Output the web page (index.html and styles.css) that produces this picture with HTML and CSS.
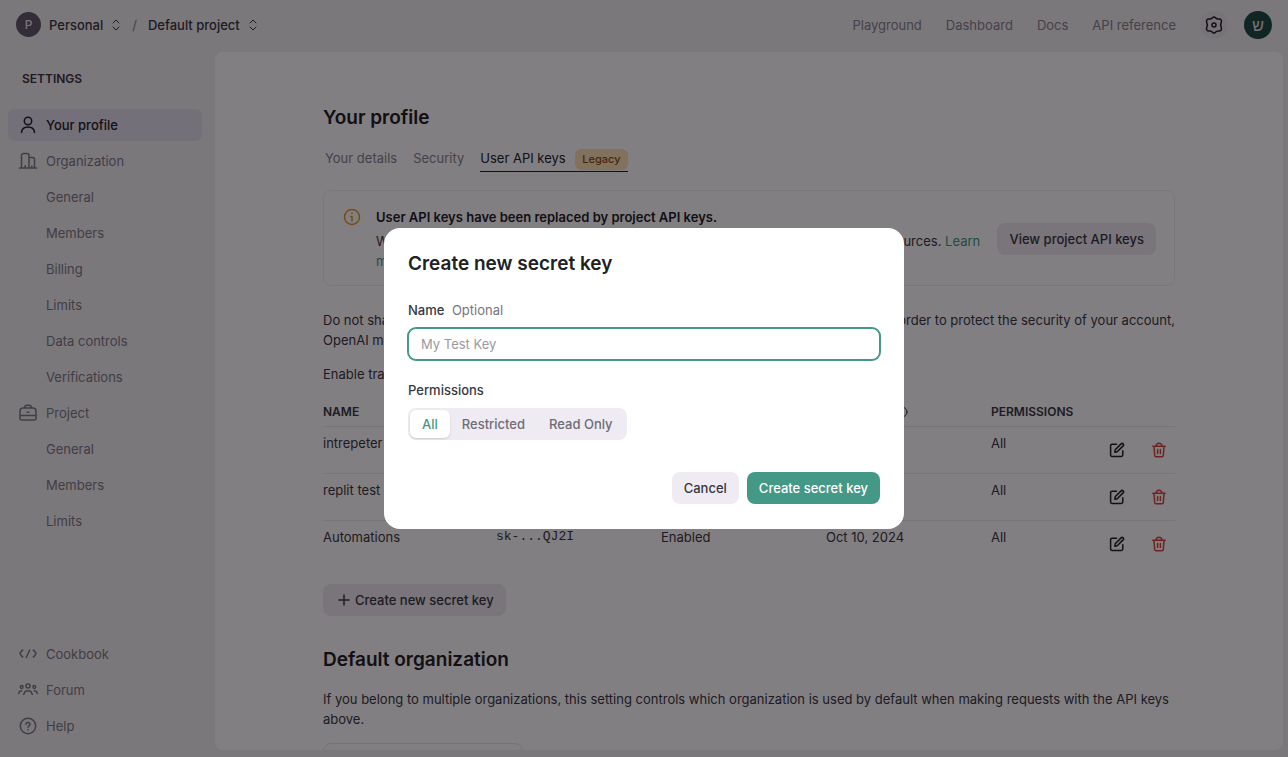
FILE: index.html
```html
<!DOCTYPE html>
<html lang="en">

<head>
    <meta charset="UTF-8">
    <meta name="viewport" content="width=device-width, initial-scale=1.0">
    <title>Your profile - API keys</title>
    <link rel="stylesheet" href="styles.css">
</head>

<body>
    <!-- Shared icons -->
    <svg class="sprite" aria-hidden="true">
        <symbol id="icon-updown" viewBox="0 0 10 14">
            <path d="M2 5l3-3 3 3M2 9l3 3 3-3" />
        </symbol>
        <symbol id="icon-edit" viewBox="0 0 16 16">
            <path d="M7.5 2.2H3A1.4 1.4 0 0 0 1.600 3.600V13A1.400 1.400 0 0 0 3 14.400h9.400a1.400 1.400 0 0 0 1.400-1.400V8.700" />
            <path d="M5.800 10.200l.4-2.400 5.900-5.900a1.400 1.400 0 0 1 2 2L8.200 9.800z" />
        </symbol>
        <symbol id="icon-trash" viewBox="0 0 16 16">
            <path d="M1.800 4.300h12.400M5 4.100C5.200 2.200 6.300 1.200 8 1.200s2.800 1 3 2.900M3 4.500l.7 9c.1.800.6 1.300 1.300 1.300h6c.7 0 1.200-.5 1.300-1.300l.7-9M6.600 7.500v4M9.400 7.500v4" />
        </symbol>
    </svg>

    <div class="app">
        <header class="topbar">
            <div class="crumbs">
                <span class="org-badge">P</span>
                <button class="crumb" type="button">Personal <svg class="updown"><use href="#icon-updown" /></svg></button>
                <span class="slash">/</span>
                <button class="crumb" type="button">Default project <svg class="updown"><use href="#icon-updown" /></svg></button>
            </div>
            <nav class="topnav">
                <a href="#">Playground</a>
                <a href="#">Dashboard</a>
                <a href="#">Docs</a>
                <a href="#">API reference</a>
                <a href="#" class="gear" aria-label="Settings">
                    <svg viewBox="0 0 20 20">
                        <path d="M8.500 2.800Q10 1 11.500 2.800Q12.800 4.400 14.900 4Q17.900 3.900 17.400 6.800Q15.800 10 17.400 13.200Q17.900 16.100 14.900 16Q12.800 15.600 11.500 17.200Q10 19 8.500 17.200Q7.200 15.600 5.100 16Q2.100 16.100 2.600 13.200Q4.200 10 2.600 6.800Q2.100 3.900 5.100 4Q7.200 4.400 8.500 2.800z" />
                        <circle cx="10" cy="10" r="2" />
                    </svg>
                </a>
                <a href="#" class="avatar" aria-label="Account">ש</a>
            </nav>
        </header>

        <aside class="sidebar">
            <h2>SETTINGS</h2>
            <nav class="menu">
                <a href="#" class="active">
                    <svg viewBox="0 0 20 20"><circle cx="10" cy="6" r="3.700" /><path d="M3.500 17.500c.3-3.600 3-5.500 6.500-5.500s6.200 1.900 6.500 5.500" /></svg>
                    Your profile
                </a>
                <a href="#">
                    <svg viewBox="0 0 20 20"><path d="M1.500 17h17M3.500 17V4.500a2 2 0 0 1 2-2h3.500a2 2 0 0 1 2 2V17M11 6.500h3.500a2 2 0 0 1 2 2V17M7.200 17v-2.500M13.800 17v-2" /></svg>
                    Organization
                </a>
                <a href="#" class="sub">General</a>
                <a href="#" class="sub">Members</a>
                <a href="#" class="sub">Billing</a>
                <a href="#" class="sub">Limits</a>
                <a href="#" class="sub">Data controls</a>
                <a href="#" class="sub">Verifications</a>
                <a href="#">
                    <svg viewBox="0 0 20 20"><path d="M4.500 5h11a3 3 0 0 1 2.500 3v7a2 2 0 0 1-2 2H4a2 2 0 0 1-2-2V8a3 3 0 0 1 2.500-3zM6.500 5c.2-1.800 1-2.700 2.500-2.700h2c1.500 0 2.300.9 2.500 2.700M2 12.500h16M9.200 9.300h1.600" /></svg>
                    Project
                </a>
                <a href="#" class="sub">General</a>
                <a href="#" class="sub">Members</a>
                <a href="#" class="sub">Limits</a>
            </nav>
            <nav class="menu menu-bottom">
                <a href="#">
                    <svg viewBox="0 0 20 20"><path d="M4.800 6C3 7 2.800 8.500 2 9.500c.8 1 1 2.500 2.800 3.500M15.200 6c1.800 1 2 2.500 2.800 3.500-.8 1-1 2.500-2.800 3.500M11.700 6l-3.400 7.500" /></svg>
                    Cookbook
                </a>
                <a href="#">
                    <svg viewBox="0 0 20 20"><circle cx="10" cy="6" r="2" /><circle cx="3.700" cy="7" r="1.400" /><circle cx="16.300" cy="7" r="1.400" /><path d="M5.800 14.500c.4-2.500 2-3.700 4.200-3.700s3.800 1.200 4.200 3.700M.8 13.500c.2-1.700 1.200-2.700 2.700-2.800M19.200 13.500c-.2-1.700-1.200-2.700-2.700-2.800" /></svg>
                    Forum
                </a>
                <a href="#">
                    <svg viewBox="0 0 20 20"><circle cx="10" cy="10" r="7.700" /><path d="M8 8.300c.2-2.400 4-2.300 4 0 0 1.500-2 1.500-2 3M10 13.500v.2" /></svg>
                    Help
                </a>
            </nav>
        </aside>

        <main class="panel">
            <div class="content">
                <h1>Your profile</h1>
                <nav class="tabs">
                    <a href="#">Your details</a>
                    <a href="#">Security</a>
                    <a href="#" class="current">User API keys <span class="tag">Legacy</span></a>
                </nav>

                <section class="notice">
                    <svg viewBox="0 0 20 20"><circle cx="10" cy="10" r="7.500" /><path d="M8.800 9.500H10V14M10 6v.5" /></svg>
                    <div class="notice-text">
                        <strong>User API keys have been replaced by project API keys.</strong>
                        <p>We recommend using project based API keys for more granular control over your resources. <a href="#">Learn more</a></p>
                    </div>
                    <button class="btn" type="button">View project API keys</button>
                </section>

                <p class="text">Do not share your API key with others or expose it in the browser or other client-side code. In order to protect the security of your account, OpenAI may automatically disable any API key that has leaked publicly.</p>
                <p class="text">Enable tracking to see usage per API key on the Usage page.</p>

                <table>
                    <thead>
                        <tr>
                            <th class="col-name">NAME</th>
                            <th class="col">SECRET KEY</th>
                            <th class="col">TRACKING</th>
                            <th class="col">LAST USED <svg class="info" viewBox="0 0 12 12"><circle cx="6" cy="6" r="5" /><path d="M6 5.500V9M6 3v.5" /></svg></th>
                            <th>PERMISSIONS</th>
                            <th></th>
                        </tr>
                    </thead>
                    <tbody>
                        <tr>
                            <td>intrepeter</td>
                            <td class="key">sk-...h4Xa</td>
                            <td>Enabled</td>
                            <td>Never</td>
                            <td>All</td>
                            <td>
                                <div class="actions">
                                    <button type="button" aria-label="Edit"><svg><use href="#icon-edit" /></svg></button>
                                    <button type="button" class="delete" aria-label="Delete"><svg><use href="#icon-trash" /></svg></button>
                                </div>
                            </td>
                        </tr>
                        <tr>
                            <td>replit test</td>
                            <td class="key">sk-...9LmT</td>
                            <td>Enabled</td>
                            <td>Never</td>
                            <td>All</td>
                            <td>
                                <div class="actions">
                                    <button type="button" aria-label="Edit"><svg><use href="#icon-edit" /></svg></button>
                                    <button type="button" class="delete" aria-label="Delete"><svg><use href="#icon-trash" /></svg></button>
                                </div>
                            </td>
                        </tr>
                        <tr>
                            <td>Automations</td>
                            <td class="key">sk-...QJ2I</td>
                            <td>Enabled</td>
                            <td>Oct 10, 2024</td>
                            <td>All</td>
                            <td>
                                <div class="actions">
                                    <button type="button" aria-label="Edit"><svg><use href="#icon-edit" /></svg></button>
                                    <button type="button" class="delete" aria-label="Delete"><svg><use href="#icon-trash" /></svg></button>
                                </div>
                            </td>
                        </tr>
                    </tbody>
                </table>

                <button class="btn btn-create" type="button">
                    <svg viewBox="0 0 12 12"><path d="M6 1v10M1 6h10" /></svg>
                    Create new secret key
                </button>

                <h1>Default organization</h1>
                <p class="text">If you belong to multiple organizations, this setting controls which organization is used by default when making requests with the API keys above.</p>
                <select class="org-select" aria-label="Default organization">
                    <option>Personal</option>
                </select>
            </div>
        </main>
    </div>

    <div class="overlay">
        <form class="modal" role="dialog" aria-modal="true" aria-labelledby="modal-title">
            <h2 id="modal-title">Create new secret key</h2>

            <label class="field-label" for="key-name">Name <span>Optional</span></label>
            <input type="text" id="key-name" placeholder="My Test Key">

            <fieldset>
                <legend class="field-label">Permissions</legend>
                <div class="segments">
                    <input type="radio" name="permissions" id="perm-all" checked>
                    <label for="perm-all">All</label>
                    <input type="radio" name="permissions" id="perm-restricted">
                    <label for="perm-restricted">Restricted</label>
                    <input type="radio" name="permissions" id="perm-read">
                    <label for="perm-read">Read Only</label>
                </div>
            </fieldset>

            <div class="modal-actions">
                <button class="btn" type="button">Cancel</button>
                <button class="btn btn-primary" type="submit">Create secret key</button>
            </div>
        </form>
    </div>
</body>

</html>
```
FILE: styles.css
```css
* {
    box-sizing: border-box;
}

body {
    margin: 0;
    font-family: Inter, "Liberation Sans", sans-serif;
    font-size: 13px;
    line-height: 20px;
    color: #353740;
    background-color: #f1f0f2;
}

h1,
h2,
p {
    margin: 0;
}

a {
    color: inherit;
    text-decoration: none;
}

button,
input,
select {
    font: inherit;
    color: inherit;
}

button {
    border: none;
    background: none;
    padding: 0;
    cursor: pointer;
}

svg {
    fill: none;
    stroke: currentColor;
    stroke-width: 1.5;
    stroke-linecap: round;
    stroke-linejoin: round;
    flex-shrink: 0;
}

.sprite {
    display: none;
}

.app {
    display: grid;
    grid-template-columns: 215px 1fr;
    grid-template-rows: 52px 1fr;
    height: 100vh;
    padding: 0 5px 7px 0;
    overflow: hidden;
}

/* Top bar */
.topbar {
    grid-column: 1 / 3;
    display: flex;
    align-items: center;
    justify-content: space-between;
    padding: 0 11px 3px 16px;
}

.crumbs,
.topnav {
    display: flex;
    align-items: center;
}

.org-badge {
    width: 25px;
    height: 25px;
    margin-right: 8px;
    border-radius: 50%;
    background-color: #5f5a6c;
    color: #e8e6ea;
    font-size: 12px;
    font-weight: 500;
    line-height: 25px;
    text-align: center;
}

.crumb {
    display: flex;
    align-items: center;
    gap: 8px;
    font-weight: 500;
}

.updown {
    width: 10px;
    height: 14px;
    stroke-width: 1;
}

.slash {
    margin: 0 11px;
    color: #85838a;
}

.topnav {
    gap: 24px;
    color: #85838a;
}

.topnav .gear {
    width: 28px;
    height: 28px;
    padding: 4px;
    border-radius: 50%;
    background-color: #e9e7ec;
    color: #202123;
}

.gear svg {
    display: block;
    width: 20px;
    height: 20px;
}

.topnav .avatar {
    width: 28px;
    height: 28px;
    margin-left: -8px;
    border-radius: 50%;
    background-color: #1a4a42;
    color: #e8e6ea;
    font-size: 16px;
    line-height: 28px;
    text-align: center;
}

/* Sidebar */
.sidebar {
    display: flex;
    flex-direction: column;
    padding: 17px 13px 8px 8px;
}

.sidebar h2 {
    margin: 0 14px 20px;
    font-size: 12px;
    font-weight: 600;
}

.menu {
    display: flex;
    flex-direction: column;
    gap: 4px;
}

.menu-bottom {
    margin-top: auto;
}

.menu a {
    display: flex;
    align-items: center;
    gap: 8px;
    height: 32px;
    padding: 0 10px;
    border-radius: 6px;
    color: #7d7b83;
}

.menu a.active {
    background-color: #e3e0ec;
    color: #202123;
    font-weight: 500;
}

.menu a.sub {
    padding-left: 38px;
}

.menu svg {
    width: 20px;
    height: 20px;
}

/* Main panel */
.panel {
    min-width: 0;
    overflow: hidden;
    border-radius: 8px;
    background-color: #fff;
}

.content {
    max-width: 852px;
    margin: 0 auto;
    padding-top: 52px;
}

h1 {
    font-size: 19px;
    font-weight: 600;
    line-height: 28px;
    color: #202123;
}

.tabs {
    display: flex;
    gap: 16px;
    margin: 13px 0 18px;
    padding-left: 2px;
    color: #85838a;
}

.tabs a {
    height: 27px;
    line-height: 26px;
}

.tabs .current {
    border-bottom: 1px solid #202123;
    color: #202123;
}

.tag {
    display: inline-block;
    height: 21px;
    margin-left: 6px;
    padding: 0 7px;
    border-radius: 6px;
    background-color: #fce3b4;
    color: #8a4b0f;
    font-size: 11px;
    font-weight: 500;
    line-height: 21px;
}

.notice {
    display: flex;
    align-items: flex-start;
    margin-bottom: 24px;
    padding: 16px 18px 14px;
    border: 1px solid #efeef1;
    border-radius: 8px;
}

.notice svg {
    width: 20px;
    height: 20px;
    margin-right: 14px;
    color: #e59a2e;
}

.notice-text {
    flex: 1;
    margin-right: 12px;
}

.notice strong {
    display: block;
    margin-bottom: 4px;
    color: #202123;
    font-weight: 600;
}

.notice a {
    color: #3f9780;
}

.notice .btn {
    align-self: center;
}

.btn {
    display: inline-flex;
    align-items: center;
    justify-content: center;
    height: 32px;
    padding: 0 12px;
    border-radius: 8px;
    background-color: #efebf3;
    font-weight: 500;
    white-space: nowrap;
}

.content .btn {
    background-color: #ecebee;
}

.text {
    margin-bottom: 14px;
}

/* Keys table */
table {
    width: 100%;
    table-layout: fixed;
    border-collapse: separate;
    border-spacing: 0;
    margin: 12px 0 16px;
}

th,
td {
    padding: 6px 0;
    text-align: left;
    vertical-align: top;
}

th {
    padding: 4px 0;
    font-size: 12px;
    font-weight: 600;
    white-space: nowrap;
}

tbody tr {
    height: 47px;
}

th,
tbody tr:not(:last-child) td {
    border-bottom: 1px solid #ebeaed;
}

.col-name {
    width: 173px;
}

.col {
    width: 165px;
}

.info {
    width: 12px;
    height: 12px;
    vertical-align: -2px;
    stroke-width: 1;
}

.key {
    font-family: "Liberation Mono", monospace;
}

.actions {
    display: flex;
    justify-content: flex-end;
    gap: 10px;
}

.actions button {
    width: 32px;
    height: 34px;
    color: #202123;
}

.actions svg {
    display: block;
    width: 16px;
    height: 16px;
    margin: 0 auto;
}

.actions .delete {
    color: #d8473b;
}

.content .btn-create {
    gap: 5px;
    margin-bottom: 30px;
    padding-left: 15px;
}

.btn-create svg {
    width: 12px;
    height: 12px;
}

.content h1 + .text {
    margin-top: 15px;
}

.org-select {
    width: 200px;
    height: 32px;
    padding: 0 10px;
    border: 1px solid #e4e2e6;
    border-radius: 8px;
    background-color: #fff;
}

/* Modal */
.overlay {
    position: fixed;
    inset: 0;
    display: flex;
    align-items: center;
    justify-content: center;
    background-color: rgba(6, 0, 5, 0.5);
}

.modal {
    width: 520px;
    max-width: 100%;
    padding: 22px 24px 25px;
    border-radius: 16px;
    background-color: #fff;
}

.modal h2 {
    margin-bottom: 22px;
    font-size: 19px;
    font-weight: 600;
    line-height: 28px;
    color: #202123;
}

.field-label {
    display: block;
    margin-bottom: 8px;
    padding: 0;
    font-weight: 500;
}

.field-label span {
    margin-left: 4px;
    color: #76747c;
    font-weight: 400;
}

.modal input[type="text"] {
    display: block;
    width: 100%;
    height: 32px;
    padding: 0 12px;
    border: 1px solid #439886;
    border-radius: 8px;
    outline: none;
    box-shadow: 0 0 0 1px #439886;
}

.modal input::placeholder {
    color: #9a98a0;
}

fieldset {
    min-width: 0;
    margin: 20px 0 32px;
    padding: 0;
    border: none;
}

.segments {
    display: inline-flex;
    height: 32px;
    padding: 2px;
    border-radius: 8px;
    background-color: #efebf3;
    vertical-align: top;
}

.segments input {
    position: absolute;
    opacity: 0;
}

.segments label {
    padding: 0 12px;
    border-radius: 6px;
    color: #6e6c75;
    font-weight: 500;
    line-height: 28px;
    cursor: pointer;
}

.segments input:checked + label {
    background-color: #fff;
    box-shadow: 0 1px 2px rgba(0, 0, 0, 0.15);
    color: #439886;
}

.modal-actions {
    display: flex;
    justify-content: flex-end;
    gap: 8px;
}

.btn-primary {
    background-color: #439886;
    color: #fff;
}
```
